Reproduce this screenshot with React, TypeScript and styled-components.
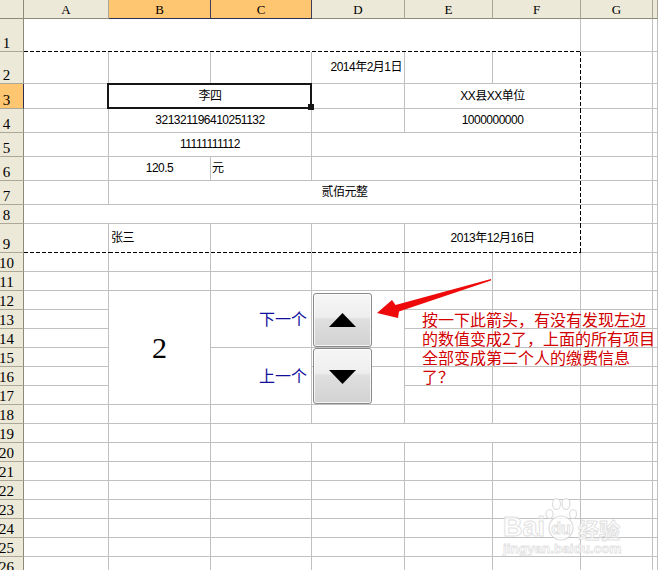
import React from 'react';
import styled, { createGlobalStyle, css } from 'styled-components';

type Edge = 'g' | 'd';
type Align = 'left' | 'center' | 'right';

const GlobalStyle = createGlobalStyle`
  html, body { margin: 0; padding: 0; background: #fff; }
  body { width: 658px; height: 570px; overflow: hidden; }
  #root { width: 658px; height: 570px; overflow: hidden; }
`;

const COL_W = [24, 85, 102, 101, 93, 88, 88, 72, 5];
const ROW_H = [19, 33, 32, 25, 24, 24, 24, 24, 19, 29, ...Array(17).fill(19)];
const COL_NAMES = ['A', 'B', 'C', 'D', 'E', 'F', 'G', ''];

const Sheet = styled.div`
  position: relative;
  display: grid;
  grid-template-columns: ${COL_W.map((w) => `${w}px`).join(' ')};
  grid-template-rows: ${ROW_H.map((h) => `${h}px`).join(' ')};
  width: 658px;
  background: #fff;
`;

const Corner = styled.div`
  grid-column: 1;
  grid-row: 1;
  box-sizing: border-box;
  background: #ece9d8;
  border-right: 1px solid #8d8a7c;
  border-bottom: 1px solid #8d8a7c;
`;

const ColHead = styled.div<{ $sel?: boolean }>`
  box-sizing: border-box;
  display: flex;
  align-items: center;
  justify-content: center;
  padding-top: 1px;
  background: ${(p) => (p.$sel ? '#ffc671' : '#ece9d8')};
  border-right: 1px solid ${(p) => (p.$sel ? '#3e3e5c' : '#a9a596')};
  border-bottom: 1px solid ${(p) => (p.$sel ? '#2e2e50' : '#8d8a7c')};
  font: 13px/1 'Liberation Serif', serif;
  color: #000;
  overflow: hidden;
`;

const RowHead = styled.div<{ $sel?: boolean }>`
  grid-column: 1;
  box-sizing: border-box;
  display: flex;
  align-items: flex-end;
  justify-content: center;
  padding-right: 10px;
  background: ${(p) => (p.$sel ? '#ffc671' : '#ece9d8')};
  border-right: 1px solid ${(p) => (p.$sel ? '#2e2e50' : '#8d8a7c')};
  border-bottom: 1px solid #aca899;
  font: 15px/1 'Liberation Serif', serif;
  color: #000;
  white-space: nowrap;
  overflow: visible;
`;

const edge = (e: Edge) => (e === 'd' ? '1px solid transparent' : '1px solid #c0c0c0');

const Cell = styled.div<{
  $c: number;
  $cs: number;
  $r: number;
  $rs: number;
  $right: Edge;
  $bottom: Edge;
  $align: Align;
  $pad: number;
  $sel?: boolean;
}>`
  grid-column: ${(p) => p.$c + 1} / span ${(p) => p.$cs};
  grid-row: ${(p) => p.$r + 1} / span ${(p) => p.$rs};
  box-sizing: border-box;
  min-width: 0;
  position: relative;
  display: flex;
  align-items: center;
  justify-content: ${(p) =>
    p.$align === 'left' ? 'flex-start' : p.$align === 'right' ? 'flex-end' : 'center'};
  padding: 0 ${(p) => p.$pad}px;
  background: #fff;
  border-right: ${(p) => edge(p.$right)};
  border-bottom: ${(p) => edge(p.$bottom)};
  white-space: nowrap;
  ${(p) =>
    p.$right === 'd' &&
    css`
      &::before {
        content: '';
        position: absolute;
        top: 0;
        bottom: -1px;
        right: -1px;
        width: 1px;
        background: repeating-linear-gradient(to bottom, #000 0 4px, transparent 4px 6px);
      }
    `}
  ${(p) =>
    p.$bottom === 'd' &&
    css`
      &::after {
        content: '';
        position: absolute;
        left: 0;
        right: -1px;
        bottom: -1px;
        height: 1px;
        background: repeating-linear-gradient(to right, #000 0 4px, transparent 4px 6px);
      }
    `}
  ${(p) =>
    p.$sel &&
    css`
      z-index: 2;
      &::after {
        content: '';
        position: absolute;
        top: -1px;
        left: -2px;
        right: -1px;
        bottom: -1px;
        border: 2px solid #161616;
        pointer-events: none;
      }
      &::before {
        content: '';
        position: absolute;
        right: -3px;
        bottom: -2px;
        width: 6px;
        height: 6px;
        background: #161616;
        z-index: 3;
      }
    `}
`;

const Val = styled.span`
  font: 12px/1.2 'Liberation Sans', 'Noto Sans CJK SC', sans-serif;
  letter-spacing: -0.5px;
  color: #000;
`;

const BigNum = styled.span`
  font: 30px/1 'Liberation Serif', serif;
  color: #000;
`;

const NavLabel = styled.span`
  font: 16px/1.2 'Noto Sans CJK SC', sans-serif;
  color: #10109c;
`;

const SpinButton = styled.div<{ $top: number; $h: number; $shift: number }>`
  position: absolute;
  left: 313px;
  top: ${(p) => p.$top}px;
  width: 59px;
  height: ${(p) => p.$h}px;
  box-sizing: border-box;
  border: 1px solid #8a8a8a;
  border-radius: 3px;
  background: linear-gradient(#f6f6f6 0%, #eeeeee 44%, #dfdfdf 49%, #d2d2d2 100%);
  box-shadow: inset 0 0 0 1px rgba(255, 255, 255, 0.75);
  display: flex;
  align-items: center;
  justify-content: center;
  padding-top: ${(p) => p.$shift}px;
  z-index: 4;
`;

const ArrowSvg = styled.svg`
  position: absolute;
  left: 370px;
  top: 272px;
  width: 126px;
  height: 52px;
  z-index: 5;
  overflow: visible;
`;

const Note = styled.div`
  position: absolute;
  left: 422px;
  top: 310px;
  color: #d20000;
  font: 16px/19px 'Noto Sans CJK SC', sans-serif;
  white-space: nowrap;
  z-index: 5;
`;

const NoteLine = styled.div``;

const Watermark = styled.div`
  position: absolute;
  left: 503px;
  top: 497px;
  display: flex;
  flex-direction: column;
  align-items: flex-start;
  pointer-events: none;
  z-index: 6;
  opacity: 0.8;
`;

const WmRow = styled.div`
  display: flex;
  align-items: flex-end;
`;

const WmBrand = styled.span`
  font: bold 27px/1 'Liberation Sans', sans-serif;
  color: #fff;
  -webkit-text-stroke: 1px #dadada;
`;

const WmCn = styled.span`
  font: bold 21px/1.15 'Noto Sans CJK SC', sans-serif;
  color: #fff;
  -webkit-text-stroke: 1px #dadada;
  margin-left: 1px;
`;

const WmUrl = styled.span`
  font: bold 13.5px/1.1 'Liberation Sans', sans-serif;
  color: #fff;
  -webkit-text-stroke: 0.8px #dadada;
  margin-top: 1px;
`;

type Merge = { r: number; c: number; cs: number; rs: number };

const MERGES: Merge[] = [
  { r: 1, c: 1, cs: 6, rs: 1 },
  { r: 3, c: 2, cs: 2, rs: 1 },
  { r: 3, c: 5, cs: 2, rs: 1 },
  { r: 4, c: 2, cs: 2, rs: 1 },
  { r: 4, c: 5, cs: 2, rs: 1 },
  { r: 5, c: 2, cs: 2, rs: 1 },
  { r: 5, c: 4, cs: 3, rs: 1 },
  { r: 6, c: 4, cs: 3, rs: 1 },
  { r: 7, c: 2, cs: 5, rs: 1 },
  { r: 8, c: 1, cs: 6, rs: 1 },
  { r: 9, c: 5, cs: 2, rs: 1 },
  { r: 12, c: 2, cs: 1, rs: 6 },
  { r: 12, c: 3, cs: 1, rs: 3 },
  { r: 15, c: 3, cs: 1, rs: 3 },
  { r: 12, c: 4, cs: 1, rs: 3 },
  { r: 16, c: 4, cs: 1, rs: 2 },
  { r: 19, c: 3, cs: 4, rs: 1 },
];

type Content = { node: React.ReactNode; align: Align; pad?: number; sel?: boolean };

const CONTENT: Record<string, Content> = {
  '2,4': { node: <Val>2014年2月1日</Val>, align: 'right', pad: 2 },
  '3,2': { node: <Val>李四</Val>, align: 'center', sel: true },
  '3,5': { node: <Val>XX县XX单位</Val>, align: 'center' },
  '4,2': { node: <Val>321321196410251132</Val>, align: 'center' },
  '4,5': { node: <Val>1000000000</Val>, align: 'center' },
  '5,2': { node: <Val>11111111112</Val>, align: 'center' },
  '6,2': { node: <Val>120.5</Val>, align: 'center' },
  '6,3': { node: <Val>元</Val>, align: 'left', pad: 1 },
  '7,2': { node: <Val>贰佰元整</Val>, align: 'center' },
  '9,2': { node: <Val>张三</Val>, align: 'left', pad: 2 },
  '9,5': { node: <Val>2013年12月16日</Val>, align: 'center' },
  '12,2': { node: <BigNum>2</BigNum>, align: 'center' },
  '12,3': { node: <NavLabel>下一个</NavLabel>, align: 'right', pad: 4 },
  '15,3': { node: <NavLabel>上一个</NavLabel>, align: 'right', pad: 4 },
};

type CellDef = Merge & { right: Edge; bottom: Edge };

function buildCells(): CellDef[] {
  const covered = new Set<string>();
  const origin = new Map<string, Merge>();
  MERGES.forEach((m) => {
    origin.set(`${m.r},${m.c}`, m);
    for (let r = m.r; r < m.r + m.rs; r++)
      for (let c = m.c; c < m.c + m.cs; c++) if (r !== m.r || c !== m.c) covered.add(`${r},${c}`);
  });
  const cells: CellDef[] = [];
  for (let r = 1; r <= 26; r++) {
    for (let c = 1; c <= 8; c++) {
      const key = `${r},${c}`;
      if (covered.has(key)) continue;
      const m = origin.get(key) ?? { r, c, cs: 1, rs: 1 };
      const lastCol = m.c + m.cs - 1;
      const lastRow = m.r + m.rs - 1;
      let right: Edge = 'g';
      let bottom: Edge = 'g';
      if (m.r >= 2 && lastRow <= 9 && lastCol === 6) right = 'd';
      if ((lastRow === 9 || lastRow === 1) && m.c <= 6 && lastCol <= 6) bottom = 'd';
      cells.push({ ...m, right, bottom });
    }
  }
  return cells;
}

const CELLS = buildCells();

const Triangle: React.FC<{ dir: 'up' | 'down' }> = ({ dir }) => (
  <svg width="27" height="14" viewBox="0 0 27 14">
    <polygon points={dir === 'up' ? '13.5,0 27,14 0,14' : '0,0 27,0 13.5,14'} fill="#000" />
  </svg>
);

const Paw: React.FC = () => (
  <svg width="32" height="44" viewBox="0 0 32 44">
    <g fill="#fff" stroke="#d6d6d6" strokeWidth="1.2">
      <ellipse cx="4.5" cy="17" rx="3.5" ry="4.5" />
      <ellipse cx="11.5" cy="7" rx="4" ry="5.5" />
      <ellipse cx="21" cy="7" rx="4" ry="5.5" />
      <ellipse cx="28" cy="17" rx="3.5" ry="4.5" />
      <circle cx="16" cy="31" r="12" />
    </g>
    <text
      x="16"
      y="37"
      textAnchor="middle"
      fontFamily="Liberation Sans, sans-serif"
      fontWeight="bold"
      fontSize="16"
      fill="#fff"
      stroke="#d6d6d6"
      strokeWidth="0.9"
    >
      du
    </text>
  </svg>
);

export default function App() {
  return (
    <>
      <GlobalStyle />
      <Sheet>
        <Corner />
        {COL_NAMES.map((n, i) => (
          <ColHead key={`col-${i}`} $sel={n === 'B' || n === 'C'} style={{ gridColumn: i + 2, gridRow: 1 }}>
            {n}
          </ColHead>
        ))}
        {Array.from({ length: 26 }, (_, i) => i + 1).map((r) => (
          <RowHead key={r} $sel={r === 3} style={{ gridRow: r + 1 }}>
            {r}
          </RowHead>
        ))}
        {CELLS.map((cell) => {
          const content = CONTENT[`${cell.r},${cell.c}`];
          return (
            <Cell
              key={`${cell.r}-${cell.c}`}
              $r={cell.r}
              $c={cell.c}
              $rs={cell.rs}
              $cs={cell.cs}
              $right={cell.right}
              $bottom={cell.bottom}
              $align={content?.align ?? 'center'}
              $pad={content?.pad ?? 2}
              $sel={content?.sel}
            >
              {content?.node}
            </Cell>
          );
        })}

        <SpinButton $top={293} $h={54} $shift={0}>
          <Triangle dir="up" />
        </SpinButton>
        <SpinButton $top={348} $h={56} $shift={2}>
          <Triangle dir="down" />
        </SpinButton>

        <ArrowSvg viewBox="370 272 126 52">
          <polygon
            points="377,313 392,300 395.5,305 491,279 491,280.5 399,311.5 398,318"
            fill="#ee0a0a"
          />
        </ArrowSvg>

        <Note>
          <NoteLine>按一下此箭头，有没有发现左边</NoteLine>
          <NoteLine>的数值变成2了，上面的所有项目</NoteLine>
          <NoteLine>全部变成第二个人的缴费信息</NoteLine>
          <NoteLine>了？</NoteLine>
        </Note>

        <Watermark>
          <WmRow>
            <WmBrand>Bai</WmBrand>
            <Paw />
            <WmCn>经验</WmCn>
          </WmRow>
          <WmUrl>jingyan.baidu.com</WmUrl>
        </Watermark>
      </Sheet>
    </>
  );
}
